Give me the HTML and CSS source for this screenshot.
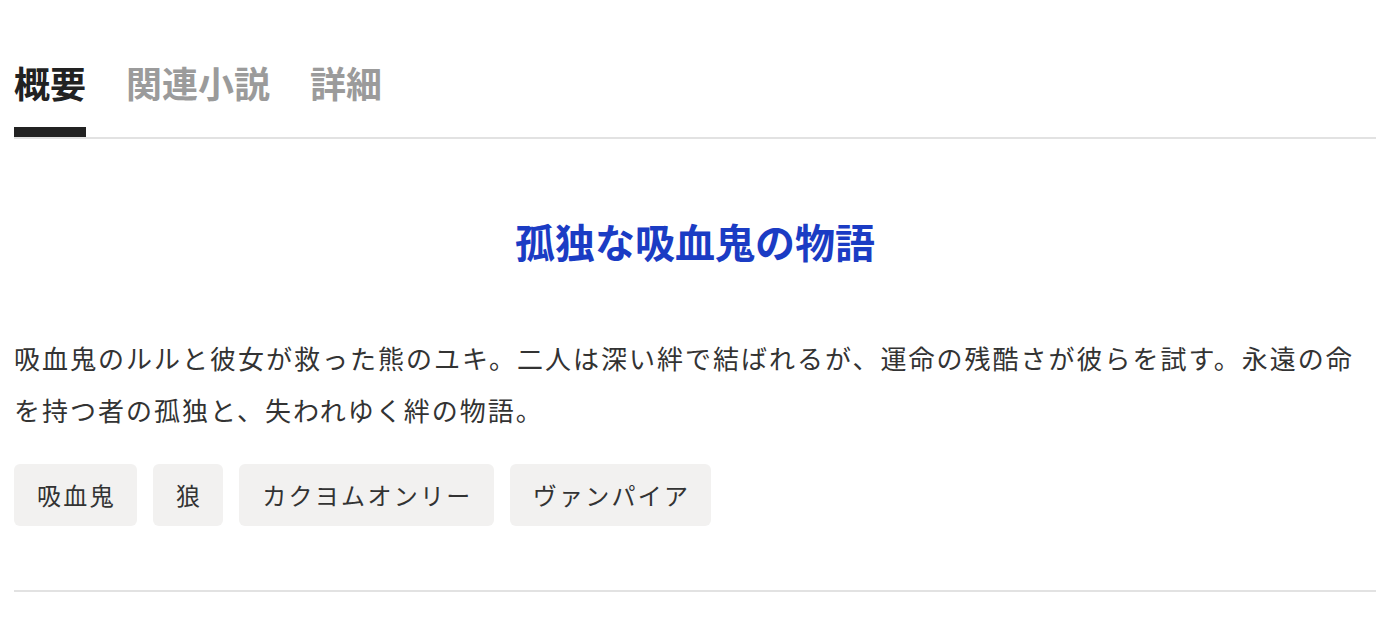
FILE: index.html
```html
<!DOCTYPE html>
<html lang="ja">
<head>
<meta charset="utf-8">
<title>孤独な吸血鬼の物語</title>
<link rel="stylesheet" href="styles.css">
</head>
<body>
<div class="page">
  <nav class="tabs">
    <a class="tab active">概要</a>
    <a class="tab">関連小説</a>
    <a class="tab">詳細</a>
  </nav>
  <section class="summary">
    <h1 class="title">孤独な吸血鬼の物語</h1>
    <p class="intro">吸血鬼のルルと彼女が救った熊のユキ。二人は深い絆で結ばれるが、運命の残酷さが彼らを試す。永遠の命を持つ者の孤独と、失われゆく絆の物語。</p>
    <ul class="tags">
      <li class="tag">吸血鬼</li>
      <li class="tag">狼</li>
      <li class="tag">カクヨムオンリー</li>
      <li class="tag">ヴァンパイア</li>
    </ul>
  </section>
  <hr class="divider">
</div>
</body>
</html>
```
FILE: styles.css
```css
html, body {
  margin: 0;
  padding: 0;
  background: #ffffff;
}

body {
  font-family: "Noto Sans CJK JP", "Noto Sans", sans-serif;
  color: #333333;
}

.page {
  padding: 0 14px;
}

.tabs {
  display: flex;
  gap: 40px;
  padding-top: 55px;
  border-bottom: 2px solid #e2e2e2;
}

.tab {
  font-size: 36px;
  font-weight: 700;
  line-height: 54px;
  color: #9b9b9b;
  padding-bottom: 18px;
  border-bottom: 10px solid transparent;
  cursor: pointer;
}

.tab.active {
  color: #222222;
  border-bottom-color: #222222;
}

.summary {
  display: flex;
  flex-direction: column;
}

.title {
  margin: 72px 0 0;
  font-size: 40px;
  line-height: 60px;
  font-weight: 700;
  text-align: center;
  color: #1b3cc4;
}

.intro {
  margin: 61px 0 0;
  font-size: 26px;
  line-height: 52px;
  letter-spacing: 2px;
  color: #333333;
}

.tags {
  list-style: none;
  margin: 28px 0 0;
  padding: 0;
  display: flex;
  flex-wrap: wrap;
  gap: 16px;
}

.tag {
  font-size: 24px;
  line-height: 36px;
  letter-spacing: 2.3px;
  padding: 13px 21px 13px 23px;
  background: #f2f1f0;
  border-radius: 6px;
  color: #333333;
}

.divider {
  margin: 64px 0 0;
  border: 0;
  height: 2px;
  background: #e2e2e2;
}
```
